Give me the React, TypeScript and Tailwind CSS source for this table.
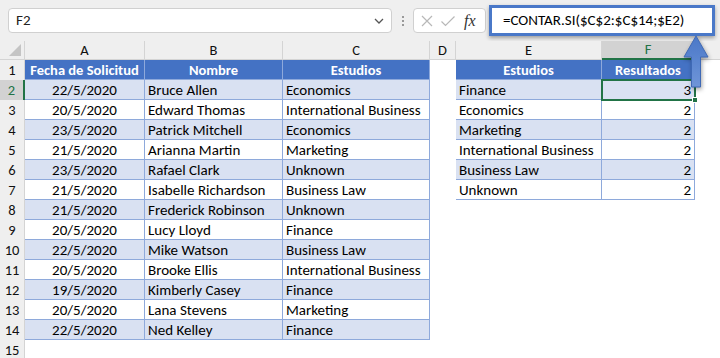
import React from "react";

const dataRows = [
  ["22/5/2020", "Bruce Allen", "Economics"],
  ["20/5/2020", "Edward Thomas", "International Business"],
  ["23/5/2020", "Patrick Mitchell", "Economics"],
  ["21/5/2020", "Arianna Martin", "Marketing"],
  ["23/5/2020", "Rafael Clark", "Unknown"],
  ["21/5/2020", "Isabelle Richardson", "Business Law"],
  ["21/5/2020", "Frederick Robinson", "Unknown"],
  ["20/5/2020", "Lucy Lloyd", "Finance"],
  ["22/5/2020", "Mike Watson", "Business Law"],
  ["20/5/2020", "Brooke Ellis", "International Business"],
  ["19/5/2020", "Kimberly Casey", "Finance"],
  ["20/5/2020", "Lana Stevens", "Marketing"],
  ["22/5/2020", "Ned Kelley", "Finance"],
];

const results: [string, number][] = [
  ["Finance", 3],
  ["Economics", 2],
  ["Marketing", 2],
  ["International Business", 2],
  ["Business Law", 2],
  ["Unknown", 2],
];

const cols = ["A", "B", "C", "D", "E", "F"];

function RowHeader({ n }: { n: number }) {
  const selected = n === 2;
  return (
    <div
      className={`h-5 flex items-center justify-center pt-[2px] text-[14.5px] ${
        selected
          ? "bg-[#d2d2d2] text-[#217346] border-r-2 border-[#217346]"
          : "bg-[#efefef] text-[#111] border-r border-[#d4d4d4]"
      }`}
    >
      {n}
    </div>
  );
}

function Cell({
  children,
  kind,
  align = "left",
  shaded = false,
}: {
  children?: React.ReactNode;
  kind: "head" | "data" | "blank";
  align?: "left" | "center" | "right";
  shaded?: boolean;
}) {
  if (kind === "blank") return <div className="h-5 bg-white" />;
  const justify =
    align === "center" ? "justify-center" : align === "right" ? "justify-end" : "justify-start";
  const look =
    kind === "head"
      ? "bg-[#4472c4] text-white font-bold text-[14.5px]"
      : shaded
      ? "bg-[#d9e1f2] text-black text-[15px]"
      : "bg-white text-black text-[15px]";
  return (
    <div
      className={`h-5 flex items-center pt-[2px] px-[3px] whitespace-nowrap overflow-hidden border-r border-b border-[#8ea9db] ${justify} ${look}`}
    >
      {children}
    </div>
  );
}

export default function App() {
  return (
    <div
      className="w-[720px] h-[358px] bg-white overflow-hidden relative"
      style={{ fontFamily: "Carlito, Lato, 'Liberation Sans', sans-serif" }}
    >
      {/* formula bar */}
      <div className="h-[41px] bg-[#efefef] flex items-center">
        <div className="ml-2 w-[384px] h-[25px] bg-white border border-[#d0d0d0] rounded-[4px] flex items-center justify-between pl-[7px] pr-[6px] text-[15px] text-[#222]">
          <span>F2</span>
          <svg width="12" height="8" viewBox="0 0 12 8">
            <path d="M2 2 L6 6 L10 2" fill="none" stroke="#555" strokeWidth="1.3" />
          </svg>
        </div>
        <div className="w-[21px] flex flex-col items-center gap-[2px]">
          <span className="w-[2px] h-[2px] bg-[#999]" />
          <span className="w-[2px] h-[2px] bg-[#999]" />
          <span className="w-[2px] h-[2px] bg-[#999]" />
        </div>
        <div className="w-[73px] h-[25px] bg-white border border-[#d0d0d0] rounded-[4px] flex items-center pl-[6px] gap-[6px]">
          <svg width="14" height="14" viewBox="0 0 14 14">
            <path d="M2 2 L12 12 M12 2 L2 12" stroke="#b8b8b8" strokeWidth="1.2" />
          </svg>
          <svg width="16" height="14" viewBox="0 0 16 14">
            <path d="M1.5 7.5 L5.5 11.5 L14.5 2.5" fill="none" stroke="#b8b8b8" strokeWidth="1.2" />
          </svg>
          <span
            className="text-[16px] italic text-[#333] ml-[2px]"
            style={{ fontFamily: "'Liberation Serif', serif" }}
          >
            fx
          </span>
        </div>
        <div className="ml-[3px] w-[226px] h-[31px] bg-white border-[3px] border-[#4a78c8] shadow-[0_2px_4px_rgba(0,0,0,0.35)] flex items-center pl-[11px] text-[15px] text-black">
          =CONTAR.SI($C$2:$C$14;$E2)
        </div>
      </div>

      {/* sheet */}
      <div className="grid grid-cols-[25px_120px_138px_147px_26px_146px_93px_1fr]">
        {/* column header row */}
        <div className="h-[19px] bg-[#efefef] border-r border-b border-[#d4d4d4] flex items-end justify-end pr-[3px] pb-[3px]">
          <svg width="12" height="12" viewBox="0 0 12 12">
            <path d="M12 0 L12 12 L0 12 Z" fill="#c4c4c4" />
          </svg>
        </div>
        {cols.map((c) => (
          <div
            key={c}
            className={`h-[19px] flex items-center justify-center pt-[1px] text-[14.5px] ${
              c === "F"
                ? "bg-[#d2d2d2] text-[#217346] border-b-2 border-[#217346] border-r border-r-[#c0c0c0]"
                : "bg-[#efefef] text-[#111] border-r border-b border-[#d4d4d4]"
            }`}
          >
            {c}
          </div>
        ))}
        <div className="h-[19px] bg-[#efefef] border-b border-[#d4d4d4]" />

        {/* row 1 */}
        <RowHeader n={1} />
        <Cell kind="head" align="center">Fecha de Solicitud</Cell>
        <Cell kind="head" align="center">Nombre</Cell>
        <Cell kind="head" align="center">Estudios</Cell>
        <Cell kind="blank" />
        <Cell kind="head" align="center">Estudios</Cell>
        <Cell kind="head" align="center">Resultados</Cell>
        <Cell kind="blank" />

        {dataRows.map((r, i) => {
          const n = i + 2;
          const shaded = i % 2 === 0;
          const res = results[i];
          return (
            <React.Fragment key={n}>
              <RowHeader n={n} />
              <Cell kind="data" align="center" shaded={shaded}>{r[0]}</Cell>
              <Cell kind="data" shaded={shaded}>{r[1]}</Cell>
              <Cell kind="data" shaded={shaded}>{r[2]}</Cell>
              <Cell kind="blank" />
              {res ? (
                <>
                  <Cell kind="data" shaded={shaded}>{res[0]}</Cell>
                  {n === 2 ? (
                    <div className="relative">
                      <Cell kind="data" align="right" shaded={shaded}>{res[1]}</Cell>
                      <div className="absolute -left-px -top-px w-[95px] h-[22px] border-2 border-[#217346]" />
                      <div className="absolute -right-[3px] -bottom-[3px] w-[6px] h-[6px] bg-[#217346] border border-white" />
                    </div>
                  ) : (
                    <Cell kind="data" align="right" shaded={shaded}>{res[1]}</Cell>
                  )}
                </>
              ) : (
                <>
                  <Cell kind="blank" />
                  <Cell kind="blank" />
                </>
              )}
              <Cell kind="blank" />
            </React.Fragment>
          );
        })}

        <RowHeader n={15} />
      </div>

      {/* arrow pointing to the formula */}
      <svg
        className="absolute left-[680px] top-[34px]"
        width="32"
        height="58"
        viewBox="0 0 32 58"
        style={{ filter: "drop-shadow(1px 2px 2px rgba(0,0,0,0.35))" }}
      >
        <defs>
          <linearGradient id="ag" x1="0" y1="0" x2="0" y2="1">
            <stop offset="0" stopColor="#4a78c8" />
            <stop offset="1" stopColor="#6f95d8" />
          </linearGradient>
        </defs>
        <path
          d="M16 2 L28 23 L20.5 23 L20.5 53 L11.5 53 L11.5 23 L4 23 Z"
          fill="url(#ag)"
          stroke="#3f69b5"
          strokeWidth="1"
        />
      </svg>
    </div>
  );
}
